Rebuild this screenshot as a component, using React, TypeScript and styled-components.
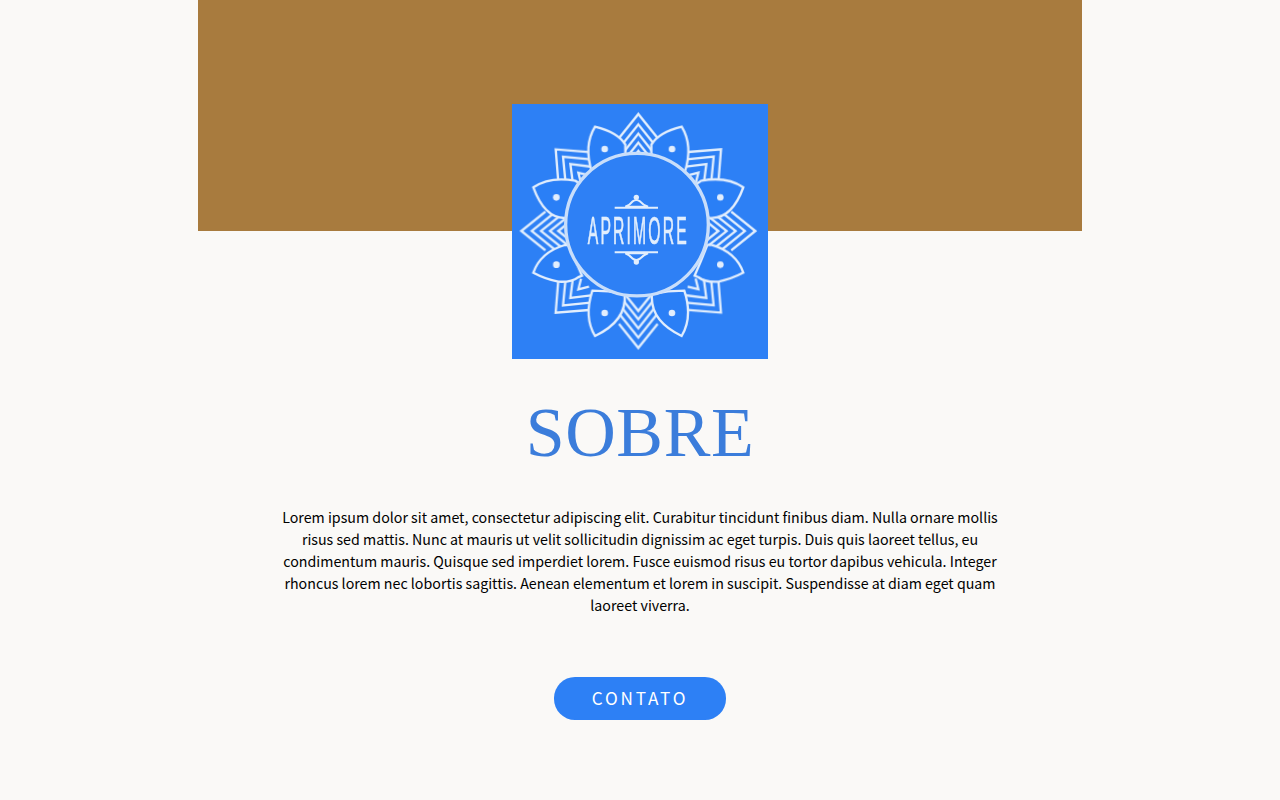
import React from 'react';
import styled, { createGlobalStyle } from 'styled-components';

const GlobalStyle = createGlobalStyle`
  html, body {
    margin: 0;
    padding: 0;
    background: #faf9f7;
  }
`;

const Page = styled.main`
  width: 884px;
  margin: 0 auto;
  display: flex;
  flex-direction: column;
  align-items: center;
  height: 800px;
`;

const Banner = styled.div`
  width: 100%;
  height: 231px;
  background: #a87b3e;
`;

const LogoBox = styled.div`
  width: 256px;
  height: 255px;
  margin-top: -127px;
  background: #2d80f5;
  position: relative;
`;

const Title = styled.h1`
  margin: 32px 0 0;
  font-family: 'Liberation Serif', serif;
  font-weight: 400;
  font-size: 70px;
  letter-spacing: 0.6px;
  line-height: 84px;
  color: #3b7ddb;
`;

const Text = styled.p`
  width: 724px;
  margin: 31px 0 0;
  font-family: 'Noto Sans CJK SC', sans-serif;
  font-size: 14.22px;
  line-height: 22px;
  color: #000;
  text-align: center;
`;

const Button = styled.a`
  display: flex;
  align-items: center;
  justify-content: center;
  box-sizing: border-box;
  width: 172px;
  height: 43px;
  margin-top: 61px;
  padding-bottom: 2px;
  border-radius: 21px;
  background: #2d80f5;
  font-family: 'Noto Sans CJK SC', sans-serif;
  font-size: 17.2px;
  letter-spacing: 2.75px;
  color: #fff;
`;

const LINE = '#e2eefd';
const BLUE = '#2c7ff6';
const CX = 379;
const CY = 381;

// left side only, the right side is mirrored
const petals = [
  { d: 'M249 68 Q318 85 340 122 L340 160 Q290 180 240 205 Q214 125 249 68 Z', dot: [278, 135] },
  { d: 'M64 250 Q113 216 190 230 L205 240 Q190 290 168 342 L158 342 Q97 341 64 250 Z', dot: [133, 280] },
  { d: 'M64 506 Q85 445 158 423 L172 423 Q190 470 210 515 L198 520 Q180 535 139 533 Q100 525 64 506 Z', dot: [133, 482] },
  { d: 'M249 696 Q215 640 241 560 Q290 560 338 570 Q345 650 249 696 Z', dot: [278, 627] },
];

const chevrons = [
  { apex: 351, arm: 58 },
  { apex: 320, arm: 62 },
  { apex: 292, arm: 62 },
  { apex: 265, arm: 55 },
  { apex: 240, arm: 40 },
];

const corners = [
  { x: 131, y: 136, arm: 100 },
  { x: 153, y: 158, arm: 82 },
  { x: 175, y: 180, arm: 62 },
  { x: 199, y: 206, arm: 32 },
];

const Logo = () => (
  <svg width="256" height="255" viewBox="0 0 768 765" aria-label="Aprimore">
    <defs>
      <filter id="soft">
        <feGaussianBlur stdDeviation="1.6" />
      </filter>
    </defs>
    <g filter="url(#soft)">
      <g fill="none" stroke={LINE} strokeWidth="7">
        {[0, 90, 180, 270].map((r) => (
          <g key={r} transform={`rotate(${r} ${CX} ${CY})`}>
            {chevrons.map(({ apex, arm }) => (
              <path
                key={apex}
                d={`M${CX - arm} ${CY - apex + arm * 1.25} L${CX} ${CY - apex} L${CX + arm} ${CY - apex + arm * 1.25}`}
              />
            ))}
          </g>
        ))}
        {[1, -1].map((sx) =>
          [1, -1].map((sy) => (
            <g
              key={`${sx}${sy}`}
              transform={`translate(${CX} ${CY}) scale(${sx} ${sy}) translate(${-CX} ${-CY})`}
            >
              {corners.map(({ x, y, arm }) => (
                <path key={x} d={`M${x + arm} ${y + 8} L${x} ${y} L${x + 8} ${y + arm}`} />
              ))}
            </g>
          )),
        )}
        {[1, -1].map((sx) =>
          petals.map((p) => (
            <g
              key={`${sx}${p.dot[1]}`}
              transform={`translate(${CX} 0) scale(${sx} 1) translate(${-CX} 0)`}
            >
              <path d={p.d} fill={BLUE} />
              <circle cx={p.dot[0]} cy={p.dot[1]} r="10" fill={LINE} stroke="none" />
            </g>
          )),
        )}
        <circle cx="375" cy="362" r="214" fill="#2d80f5" stroke="#c9defa" strokeWidth="10" />
        <path d="M308 311 H438 M308 445 H438" strokeWidth="6" />
        <path d="M340 308 Q355 302 362 292 Q373 284 384 292 Q392 302 408 308 Z" strokeWidth="6" />
        <path d="M340 448 Q355 454 362 464 Q373 472 384 464 Q392 454 408 448 Z" strokeWidth="6" />
        <circle cx="373" cy="280" r="8" fill={LINE} stroke="none" />
        <circle cx="373" cy="474" r="8" fill={LINE} stroke="none" />
      </g>
      <text
        x="0"
        y="420"
        textAnchor="middle"
        letterSpacing="16"
        fontFamily="'Liberation Sans', sans-serif"
        fontSize="118"
        fill={LINE}
        stroke={LINE}
        strokeWidth="2"
        transform="translate(379 0) scale(0.4 1)"
      >
        APRIMORE
      </text>
    </g>
  </svg>
);

export default function App() {
  return (
    <>
      <GlobalStyle />
      <Page>
        <Banner />
        <LogoBox>
          <Logo />
        </LogoBox>
        <Title>SOBRE</Title>
        <Text>
          Lorem ipsum dolor sit amet, consectetur adipiscing elit. Curabitur tincidunt finibus diam.
          Nulla ornare mollis risus sed mattis. Nunc at mauris ut velit sollicitudin dignissim ac
          eget turpis. Duis quis laoreet tellus, eu condimentum mauris. Quisque sed imperdiet lorem.
          Fusce euismod risus eu tortor dapibus vehicula. Integer rhoncus lorem nec lobortis
          sagittis. Aenean elementum et lorem in suscipit. Suspendisse at diam eget quam laoreet
          viverra.
        </Text>
        <Button>CONTATO</Button>
      </Page>
    </>
  );
}
